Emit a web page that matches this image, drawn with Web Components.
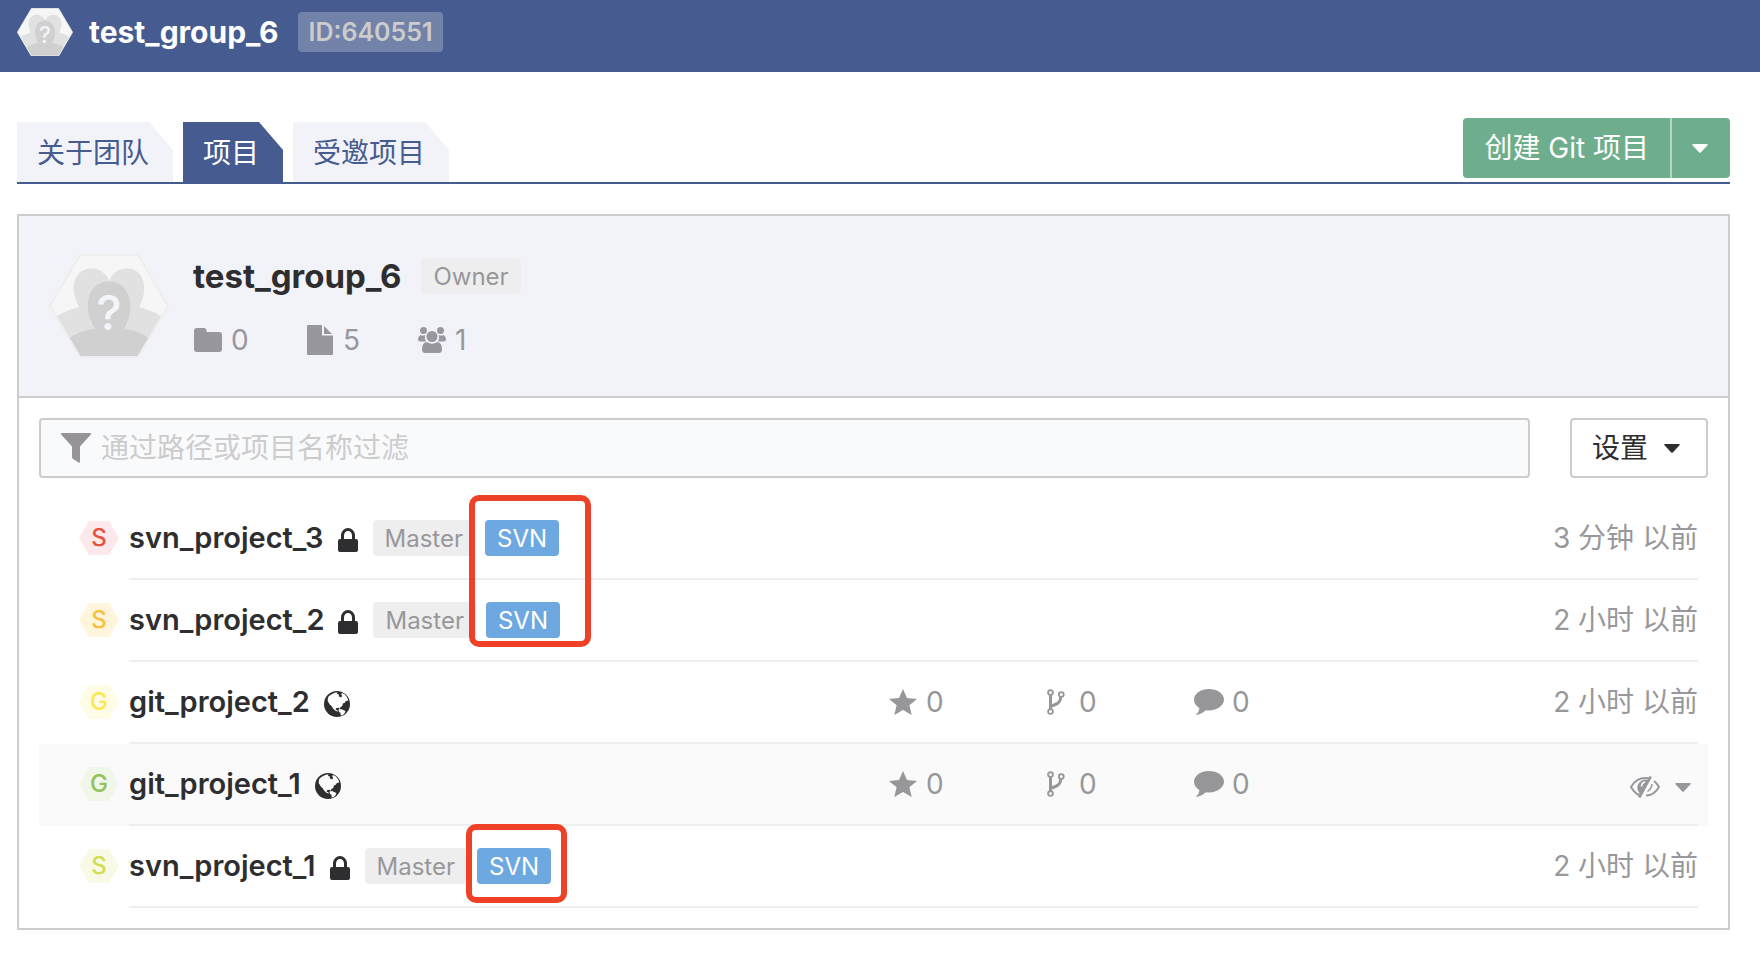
<!DOCTYPE html>
<html lang="zh-CN">
<head>
<meta charset="utf-8">
<meta name="viewport" content="width=device-width, initial-scale=1">
<title>test_group_6</title>
<style>
  :root {
    --brand: #465b8f;
    --brand-soft: #f2f3f9;
    --green: #6eae8c;
    --blue: #6da8e1;
    --ink: #2e2e30;
    --muted: #98979b;
    --line: #cccccc;
    --line-soft: #eeeeee;
    --mark: #ee4127;
  }
  body {
    margin: 0;
    background: #fff;
    color: var(--ink);
    font: 400 28px/40px Inter, "Noto Sans CJK SC", sans-serif;
  }
  main { padding: 46px 30px 48px 17px; }
</style>
</head>
<body>
<group-header name="test_group_6" group-id="640551"></group-header>
<main>
  <tab-bar>
    <tab-item href="#about">关于团队</tab-item>
    <tab-item href="#projects" active>项目</tab-item>
    <tab-item href="#invited">受邀项目</tab-item>
    <split-button slot="action" more="更多创建方式">创建 Git 项目</split-button>
  </tab-bar>
  <group-panel>
    <group-summary slot="summary" name="test_group_6" role-name="Owner" folders="0" files="5" members="1"></group-summary>
    <filter-bar placeholder="通过路径或项目名称过滤">设置</filter-bar>
    <project-list>
      <project-row name="svn_project_3" letter="S" tint="#fde9eb" tone="#e5533f" access="lock" member="Master" kind="SVN" when="3 分钟 以前"></project-row>
      <project-row name="svn_project_2" letter="S" tint="#fff5dc" tone="#f8bf3a" access="lock" member="Master" kind="SVN" when="2 小时 以前"></project-row>
      <project-row name="git_project_2" letter="G" tint="#fffce6" tone="#fce94f" access="globe" counts="0,0,0" when="2 小时 以前"></project-row>
      <project-row name="git_project_1" letter="G" tint="#f0f7e9" tone="#94c159" access="globe" counts="0,0,0" active></project-row>
      <project-row name="svn_project_1" letter="S" tint="#f8fae5" tone="#d3dc52" access="lock" member="Master" kind="SVN" when="2 小时 以前"></project-row>
      <mark-frame slot="marks" style="--x:430px;--y:-3px;--w:122px;--h:152px"></mark-frame>
      <mark-frame slot="marks" style="--x:427px;--y:326px;--w:101px;--h:79px"></mark-frame>
    </project-list>
  </group-panel>
</main>
<script>
const define = (name, render) => customElements.define(name, class extends HTMLElement {
  connectedCallback() {
    if (this.shadowRoot) return;
    const t = document.createElement('template');
    t.innerHTML = render(k => this.getAttribute(k), this);
    this.attachShadow({ mode: 'open' }).append(t.content.cloneNode(true));
  }
});

/* name: [width, height, markup] */
const ICONS = {
  caret: [16, 9, '<path d="M1 0h14q1.500 0 .5 1.300L9 8.300q-1 1-2 0L.5 1.300Q-.5 0 1 0z"/>'],
  folder: [28, 24, '<path d="M3 0h7q2 0 2.500 2v2H25q3 0 3 3v14q0 3-3 3H3q-3 0-3-3V3q0-3 3-3z"/>'],
  file: [26, 30, '<path d="M1 0h14v10.500h11V29q0 1-1 1H1q-1 0-1-1V1q0-1 1-1z"/><path d="M17 1l8 8h-8z"/>'],
  users: [28, 26, '<circle cx="5.500" cy="3.500" r="3.500"/><circle cx="22.500" cy="3.500" r="3.500"/><circle cx="14" cy="9.500" r="5.500"/><path d="M2.500 8q2 1 5 0-1.500 3 .5 6.500H2.500Q0 14.500 0 12t2.500-4zM25.500 8q-2 1-5 0 1.500 3-.5 6.500h5.500Q28 14.500 28 12t-2.500-4zM8.500 15q5.500 3.500 11 0Q24 15.500 24 22.500q0 3.500-3.500 3.500h-13Q4 26 4 22.500 4 15.500 8.500 15z"/>'],
  funnel: [30, 30, '<path d="M1 0h28q1.500 0 .7 1.700L19 13.500V29q0 1-1 .8L12 26q-1-.6-1-2V13.500L.3 1.700Q-.5 0 1 0z"/>'],
  lock: [20, 24, '<path fill-rule="evenodd" d="M3 11V7.500a7 7.500 0 0 1 14 0V11h1q2 0 2 2v9q0 2-2 2H2q-2 0-2-2v-9q0-2 2-2zm3 0h8V7.500a4 4.500 0 0 0-8 0z"/>'],
  globe: [26, 26, '<circle cx="13" cy="13" r="13"/><path fill="var(--bg,#fff)" d="M4.800 5.200L8 3l3.500-1.600 2 .2-.6 1.400 2.200.4-.5 1.800 2.600 1.200 1-1.600-1.200-1.500 1-1.400 2.700 1.300 2.400 3 1.300 3.300-2.600.5-1 1.800-1.900.8-.6 2.300-2.100 1.300-.4 1.900-1.200-1.400-2.300.4-.7 1.600 1.600.5.9 1.400-2.300-.5-2.600-2.400-1.300-2.200-2.300-2.300L3.700 10l.2-3zM14.500 18.600l2.500-.5 2.200 1 2.200.8-.5 1.800-2 2.300-2.100.6-.3-2.700-1.700-1.300z"/>'],
  star: [28, 26, '<path d="M14 0l4 9 10 .9-7.600 6.400L22.700 26 14 21l-8.700 5 2.300-9.700L0 9.900 10 9z"/>'],
  fork: [18, 26, '<g fill="none" stroke="currentColor" stroke-width="1.800"><circle cx="3.500" cy="3.500" r="2.400"/><circle cx="3.500" cy="22.500" r="2.400"/><circle cx="14.300" cy="5.500" r="2.400"/></g><path fill="none" stroke="currentColor" stroke-width="3" d="M3.500 6v14M3.500 17.500C8 15.500 13.500 15 13.800 8"/>'],
  comment: [30, 26, '<path d="M15 0c8.300 0 15 4.700 15 10.500S23.300 21.500 15 21.500q-1.500 0-3-.2Q8 25 3 26q-1.200 0-.5-1Q5 23 5.500 19.200 0 16 0 10.500C0 4.700 6.700 0 15 0z"/>'],
  hide: [30, 22, '<path fill="none" stroke="currentColor" stroke-width="2" d="M19 2.300Q7 .5 1 11q3 5.500 8 8M24 5q3 2.300 5 6-5 8.500-13 8.500"/><path d="M19.500 0L22 1 10.500 22 8 21l1.500-4q-3.500-4-1.500-8.500Q11 3 18 3.600z"/><path fill="none" stroke="currentColor" stroke-width="1.500" d="M22 8q0 4-4.500 7.500"/><path fill="none" stroke="#fafafa" stroke-width="1.600" d="M11.500 10.500q.3-4 3.500-4.500"/>'],
};

define('ui-icon', a => {
  const [w, h, body] = ICONS[a('name')];
  return `<style>:host{display:block;flex:none}svg{display:block}</style>
  <svg width="${w}" height="${h}" viewBox="0 0 ${w} ${h}" fill="currentColor" aria-hidden="true">${body}</svg>`;
});

define('group-avatar', () => `
<style>:host{display:block;flex:none;width:120px}svg{display:block;width:100%;height:auto}
text{font:500 48px Inter,sans-serif}</style>
<svg viewBox="0 0 120 104" role="img" aria-label="团队头像">
  <defs><clipPath id="hex"><path d="M31 1h58l30 51-30 51H31L1 52z"/></clipPath></defs>
  <g clip-path="url(#hex)">
    <path fill="#f6f6f6" d="M0 0h120v104H0z"/>
    <path fill="#e1e1e1" d="M30 53C20 36 24 15 42 14.500q13 0 18 12.500 5-12.500 18-12.500C96 15 100 36 90 53q17 4 28 14v37H2V67q11-10 28-14z"/>
    <path fill="#d0d0d0" d="M46 75C33 55 38 27.500 60 27.500S87 55 75 75q14 1 26 10v20H19V85q12-9 27-10z"/>
    <text x="60" y="76" text-anchor="middle" fill="#f4f5fa">?</text>
  </g>
  <path fill="none" stroke="#eeeeee" stroke-width="2" d="M31 1h58l30 51-30 51H31L1 52z"/>
</svg>`);

define('group-header', a => `
<style>
:host{display:flex;align-items:center;height:72px;box-sizing:border-box;padding:0 30px 8px 17px;background:var(--brand)}
group-avatar{width:56px;margin-right:16px}
h1{margin:0 20px 0 0;color:#fff;font-size:30px;line-height:40px;font-weight:700}
span{padding:0 10px;border-radius:4px;background:rgba(255,255,255,.24);color:#ccc;font-size:25px;line-height:40px;font-weight:600}
</style>
<group-avatar></group-avatar><h1>${a('name')}</h1><span>ID:${a('group-id')}</span>`);

define('tab-bar', () => `
<style>
:host{display:flex;align-items:flex-end;justify-content:space-between;border-bottom:2px solid var(--brand)}
nav{display:flex;gap:10px}
::slotted([slot=action]){margin-bottom:4px}
</style>
<nav><slot></slot></nav><slot name="action"></slot>`);

define('tab-item', (a, el) => `
<style>
:host{display:block}
a{display:block;box-sizing:border-box;height:60px;padding:0 24px 0 20px;line-height:62px;text-decoration:none;
color:var(--brand);background:var(--brand-soft);clip-path:polygon(0 0,calc(100% - 24px) 0,100% 28px,100% 100%,0 100%)}
:host([active]) a{background:var(--brand);color:#fff}
</style>
<a href="${a('href')}"${el.hasAttribute('active') ? ' aria-current="page"' : ''}><slot></slot></a>`);

define('split-button', a => `
<style>
:host{display:flex;height:60px}
button{border:0;margin:0;padding:0;font:inherit;color:#fff;background:var(--green);cursor:pointer}
.main{padding:0 21px;border-radius:4px 0 0 4px}
.more{display:grid;place-items:center;width:60px;padding-right:2px;border-left:2px solid #b6d6c5;border-radius:0 4px 4px 0}
</style>
<button class="main" type="button"><slot></slot></button>
<button class="more" type="button" aria-label="${a('more')}"><ui-icon name="caret"></ui-icon></button>`);

define('group-panel', () => `
<style>
:host{display:block;margin-top:30px;border:2px solid var(--line)}
header{padding:38px 30px;background:var(--brand-soft);border-bottom:2px solid var(--line)}
section{padding:20px}
</style>
<header><slot name="summary"></slot></header><section><slot></slot></section>`);

define('ui-tag', () => `
<style>
:host{display:block;flex:none;padding:2px 12px 0;border-radius:4px;background:#eee;color:var(--muted);font-size:24px;line-height:34px;font-weight:400}
:host([solid]){background:var(--blue);color:#fff}
</style><slot></slot>`);

define('group-summary', a => `
<style>
:host{display:flex;gap:24px;height:104px}
.info{display:flex;flex-direction:column;justify-content:space-between}
.title{display:flex;align-items:center;gap:20px}
h2{margin:0;font-size:33px;line-height:44px;font-weight:700}
dl{display:flex;margin:0;color:var(--muted)}
dl div{display:flex;align-items:center;gap:8px;width:112px;height:36px}
dt,dd{margin:0}
dt{display:grid;place-items:center;width:30px}
</style>
<group-avatar></group-avatar>
<div class="info">
  <div class="title"><h2>${a('name')}</h2><ui-tag>${a('role-name')}</ui-tag></div>
  <dl>
    <div><dt aria-label="子团队"><ui-icon name="folder"></ui-icon></dt><dd>${a('folders')}</dd></div>
    <div><dt aria-label="项目"><ui-icon name="file"></ui-icon></dt><dd>${a('files')}</dd></div>
    <div><dt aria-label="成员"><ui-icon name="users"></ui-icon></dt><dd>${a('members')}</dd></div>
  </dl>
</div>`);

define('filter-bar', a => `
<style>
:host{display:flex;gap:40px;height:60px}
label{flex:1;display:flex;align-items:center;gap:10px;padding:0 20px;border:2px solid var(--line);border-radius:4px;background:#f9fafc;color:#969499}
input{flex:1;min-width:0;border:0;padding:0;outline:0;background:none;font:inherit;color:var(--ink)}
input::placeholder{color:var(--line);opacity:1}
button{display:flex;align-items:center;gap:16px;padding:0 26px 0 20px;border:2px solid var(--line);border-radius:4px;background:#fff;font:inherit;color:var(--ink);cursor:pointer}
</style>
<label><ui-icon name="funnel"></ui-icon><input type="text" aria-label="${a('placeholder')}" placeholder="${a('placeholder')}"></label>
<button type="button"><slot></slot><ui-icon name="caret"></ui-icon></button>`);

define('project-list', () => `
<style>:host{display:block;position:relative;padding-top:20px}</style>
<slot></slot><slot name="marks"></slot>`);

/* Hand-placed highlight over the list */
define('mark-frame', () => `
<style>:host{display:block;position:absolute;box-sizing:border-box;left:var(--x);top:calc(20px + var(--y));width:var(--w);height:var(--h);
border:6px solid var(--mark);border-radius:10px;pointer-events:none}</style>`);

define('letter-avatar', a => `
<style>
:host{display:grid;place-items:center;flex:none;width:40px;height:34px;font-size:24px;line-height:34px;font-weight:500;
clip-path:polygon(25% 0,75% 0,100% 50%,75% 100%,25% 100%,0 50%);background:${a('tint')};color:${a('tone')}}
</style>${a('letter')}`);

define('project-row', a => {
  const counts = a('counts') ? a('counts').split(',') : [];
  const icons = ['star', 'fork', 'comment'];
  return `
<style>
:host{display:flex;align-items:center;gap:10px;padding:0 10px 0 40px}
:host([active]){background:#fafafa;--bg:#fafafa}
letter-avatar{margin-bottom:2px}
.body{flex:1;display:grid;grid-template-columns:759fr 153fr 153fr 153fr 351fr;align-items:center;height:80px;border-bottom:2px solid var(--line-soft)}
.name{display:flex;align-items:center}
a{color:inherit;text-decoration:none;font-size:29px;font-weight:600;margin-right:14px}
.lock{margin-right:15px;padding-top:4px}
.globe{padding-top:4px}
.tags{display:flex;gap:10px}
.count{display:flex;align-items:center;gap:8px;color:#979799}
.count ui-icon{width:30px;display:grid;place-items:center}
.end{grid-column:5;display:flex;justify-content:flex-end;color:var(--muted)}
.end button{display:flex;align-items:center;padding:6px 0 0;border:0;background:none;color:inherit;cursor:pointer}
.end .menu{margin:0 7px 0 15px}
</style>
<letter-avatar letter="${a('letter')}" tint="${a('tint')}" tone="${a('tone')}"></letter-avatar>
<div class="body">
  <div class="name"><a href="#${a('name')}">${a('name')}</a><ui-icon class="${a('access')}" name="${a('access')}"></ui-icon>
  ${a('kind') ? `<div class="tags"><ui-tag>${a('member')}</ui-tag><ui-tag solid>${a('kind')}</ui-tag></div>` : ''}</div>
  ${counts.map((n, i) => `<div class="count"><ui-icon name="${icons[i]}"></ui-icon><span>${n}</span></div>`).join('')}
  <div class="end">${a('when') ? `<span>${a('when')}</span>` :
    `<button type="button" aria-label="隐藏"><ui-icon name="hide"></ui-icon></button><button class="menu" type="button" aria-label="更多"><ui-icon name="caret"></ui-icon></button>`}</div>
</div>`;
});
</script>
</body>
</html>
